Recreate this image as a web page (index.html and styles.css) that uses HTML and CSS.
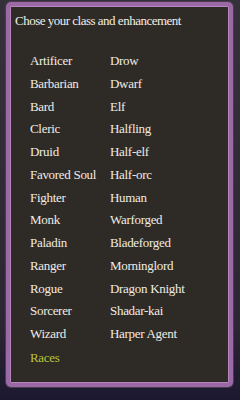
FILE: index.html
```html
<!DOCTYPE html>
<html lang="en">
<head>
  <meta charset="UTF-8">
  <title>Class and enhancement</title>
  <link rel="stylesheet" href="styles.css">
</head>
<body>
  <div class="frame">
    <div class="panel">
      <h1 class="title">Chose your class and enhancement</h1>
      <div class="lists">
        <ul class="col">
          <li>Artificer</li>
          <li>Barbarian</li>
          <li>Bard</li>
          <li>Cleric</li>
          <li>Druid</li>
          <li>Favored Soul</li>
          <li>Fighter</li>
          <li>Monk</li>
          <li>Paladin</li>
          <li>Ranger</li>
          <li>Rogue</li>
          <li>Sorcerer</li>
          <li>Wizard</li>
          <li class="link">Races</li>
        </ul>
        <ul class="col">
          <li>Drow</li>
          <li>Dwarf</li>
          <li>Elf</li>
          <li>Halfling</li>
          <li>Half-elf</li>
          <li>Half-orc</li>
          <li>Human</li>
          <li>Warforged</li>
          <li>Bladeforged</li>
          <li>Morninglord</li>
          <li>Dragon Knight</li>
          <li>Shadar-kai</li>
          <li>Harper Agent</li>
        </ul>
      </div>
    </div>
  </div>
</body>
</html>
```

FILE: styles.css
```css
html, body {
  margin: 0;
  height: 400px;
}
body {
  font-family: "Liberation Serif", "Times New Roman", serif;
  background: linear-gradient(#35313a, #2c2833 80%, #1c1830);
  overflow: hidden;
}
.frame {
  margin: 2px 7px 0 6px;
  height: 385px;
  box-sizing: border-box;
  border: 4px solid #9b6aa6;
  border-radius: 5px;
  box-shadow: inset 0 0 0 1px #b884c0, 0 0 0 1px #4a3a52;
  background: #2e2a26;
}
.panel {
  padding: 7px 4px 0 5px;
}
.title {
  margin: 0;
  font-size: 13px;
  letter-spacing: -0.5px;
  font-weight: normal;
  color: #f2eee6;
  line-height: 16px;
}
.lists {
  display: flex;
  padding: 21px 0 0 15px;
}
.col {
  list-style: none;
  margin: 0;
  padding: 0;
}
.col:first-child {
  width: 80px;
}
.col li {
  font-size: 13px;
  letter-spacing: -0.3px;
  line-height: 22.75px;
  color: #f0ece4;
  white-space: nowrap;
}
.col li.link {
  color: #b9c23a;
  margin-top: 1px;
}
```
